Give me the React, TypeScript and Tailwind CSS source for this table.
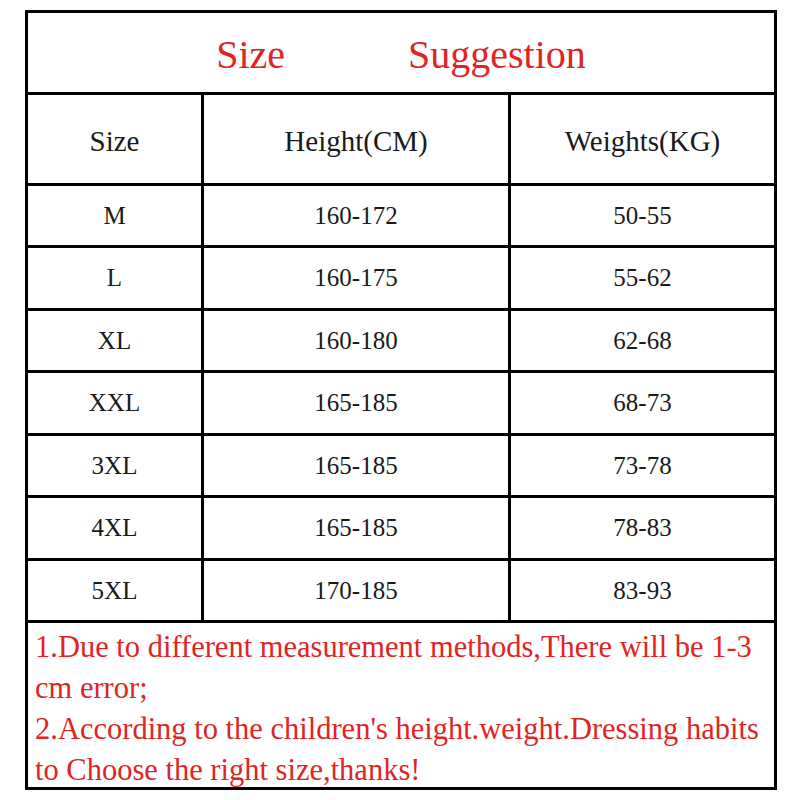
import React from "react";

const rows: [string, string, string, string][] = [
  ["M", "160-172", "50-55", "h-[62px]"],
  ["L", "160-175", "55-62", "h-[63px]"],
  ["XL", "160-180", "62-68", "h-[62px]"],
  ["XXL", "165-185", "68-73", "h-[63px]"],
  ["3XL", "165-185", "73-78", "h-[62px]"],
  ["4XL", "165-185", "78-83", "h-[63px]"],
  ["5XL", "170-185", "83-93", "h-[62px]"],
];

export default function App() {
  return (
    <div
      className="w-[800px] h-[800px] bg-white pt-[10px] pl-[25px]"
      style={{ fontFamily: '"Liberation Serif", "Times New Roman", serif' }}
    >
      <div className="w-[752px] border-[3px] border-black flex flex-col">
        <div className="h-[82px] border-b-[3px] border-black flex items-center justify-center gap-[123px] pt-[4px] text-[40px] text-[#e02424]">
          <span>Size</span>
          <span>Suggestion</span>
        </div>
        <div className="h-[91px] border-b-[3px] border-black grid grid-cols-[176px_307px_263px] text-[29px] text-[#1a1a1a]">
          <div className="border-r-[3px] border-black flex items-center justify-center pt-[5px]">Size</div>
          <div className="border-r-[3px] border-black flex items-center justify-center pt-[5px]">Height(CM)</div>
          <div className="flex items-center justify-center pt-[5px]">Weights(KG)</div>
        </div>
        {rows.map((r) => (
          <div
            key={r[0]}
            className={`${r[3]} border-b-[3px] border-black grid grid-cols-[176px_307px_263px] text-[25px] text-[#1a1a1a]`}
          >
            <div className="border-r-[3px] border-black flex items-center justify-center">{r[0]}</div>
            <div className="border-r-[3px] border-black flex items-center justify-center">{r[1]}</div>
            <div className="flex items-center justify-center">{r[2]}</div>
          </div>
        ))}
        <div className="h-[164px] pt-[4px] pl-[7px] text-[30.5px] leading-[41px] text-[#e02424] whitespace-nowrap">
          <div>1.Due to different measurement methods,There will be 1-3</div>
          <div>cm error;</div>
          <div>2.According to the children's height.weight.Dressing habits</div>
          <div>to Choose the right size,thanks!</div>
        </div>
      </div>
    </div>
  );
}
